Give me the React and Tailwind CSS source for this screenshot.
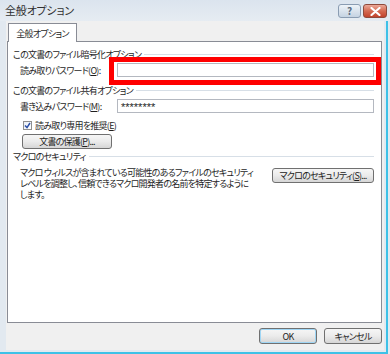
import React from "react";

const F = "font-['Noto_Sans_CJK_JP','Noto_Sans',sans-serif] [font-feature-settings:'palt']";
const T = "text-[9px] tracking-[-0.75px] leading-none";

function Btn({ children, className = "" }) {
  return (
    <div
      className={
        "flex items-center justify-center rounded-[3px] border border-[#707070] bg-linear-to-b from-[#f6f6f6] via-[#ebebeb] to-[#d6d6d6] text-[#222] " +
        T +
        " " +
        className
      }
    >
      {children}
    </div>
  );
}

function Header({ children }) {
  return (
    <div className="flex h-[14px] items-center pl-[5px] pr-[7px]">
      <span className={T + " text-[#1e1e1e] whitespace-nowrap"}>{children}</span>
      <div className="ml-[3px] h-px flex-1 bg-[#d7dfe7]" />
    </div>
  );
}

export default function App() {
  return (
    <div className={"relative h-[354px] w-[390px] overflow-hidden bg-[#e2e9f0] " + F}>
      {/* title bar */}
      <div className="flex h-[21px] items-start justify-between bg-linear-to-b from-[#dbe4ee] to-[#e6ecf2] pl-[5px] pr-[3px]">
        <span className="mt-[3px] text-[11px] leading-[15px] tracking-[-0.2px] text-[#303030]">全般オプション</span>
        <div className="mt-[4px] flex gap-[2px]">
          <div className="flex h-[14px] w-[23px] items-center justify-center rounded-[3px] border border-[#8a9cb2] bg-linear-to-b from-[#eef3f8] to-[#c5d3e2] text-[10px] font-bold leading-none text-[#5a6b80]">
            ?
          </div>
          <div className="flex h-[14px] w-[24px] items-center justify-center rounded-[3px] border border-[#8e4a3c] bg-linear-to-b from-[#eba899] via-[#d46a52] to-[#c2432c]">
            <svg width="11" height="9" viewBox="0 0 11 9">
              <path d="M1.5 1 L9.5 8 M9.5 1 L1.5 8" stroke="#ffffff" strokeWidth="2.2" strokeLinecap="round" />
            </svg>
          </div>
        </div>
      </div>

      {/* frame with cyan edge */}
      <div className="h-[333px] w-[388px] border-b-2 border-r-2 border-[#3dc1e7] pb-[2px] pl-[6px] pr-[2px]">
        <div className="flex h-full flex-col bg-[#f0f0f0]">
          {/* tab */}
          <div className="relative z-10 -mb-px ml-[2px] mt-[2px] flex h-[19px] w-[69px] items-center justify-center border border-b-0 border-[#898c95] bg-white">
            <span className={T + " text-[#1e1e1e]"}>全般オプション</span>
          </div>
          {/* panel */}
          <div className="ml-[1px] flex h-[282px] w-[375px] flex-col border border-[#898c95] bg-white pt-[5px] text-[#1e1e1e]">
            <Header>この文書のファイル暗号化オプション</Header>
            <div className="mt-[2px] flex h-[14px] items-center">
              <span className={"w-[109px] pl-[12px] whitespace-nowrap " + T}>読み取りパスワード(<u>O</u>):</span>
              <div className="h-[14px] w-[257px] border border-[#b4b8c0] bg-white" />
            </div>
            <div className="mt-[6px]">
              <Header>この文書のファイル共有オプション</Header>
            </div>
            <div className="mt-[2px] flex h-[14px] items-center">
              <span className={"w-[109px] pl-[12px] whitespace-nowrap " + T}>書き込みパスワード(<u>M</u>):</span>
              <div className="flex h-[14px] w-[257px] items-center border border-[#b4b8c0] bg-white pl-[3px] font-['Liberation_Sans',sans-serif] text-[11px] leading-none">
                <span className="mt-[3px]">********</span>
              </div>
            </div>
            <div className="mt-[5px] flex h-[14px] items-center pl-[15px]">
              <div className="flex h-[9px] w-[9px] items-center justify-center border border-[#8f8f8f] bg-linear-to-br from-[#e8eef6] to-white">
                <svg width="7" height="7" viewBox="0 0 7 7">
                  <path d="M1 3.5 L3 5.6 L6 1" fill="none" stroke="#2b4fa8" strokeWidth="1.5" />
                </svg>
              </div>
              <span className={"ml-[3px] " + T}>読み取り専用を推奨(<u>E</u>)</span>
            </div>
            <div className="ml-[14px] mt-[2px]">
              <Btn className="h-[15px] w-[90px]">文書の保護(<u>P</u>)...</Btn>
            </div>
            <div className="mt-0">
              <Header>マクロのセキュリティ</Header>
            </div>
            <div className="mt-[4px] flex items-start pl-[12px] pr-[7px]">
              <p className="whitespace-nowrap text-[9px] leading-[11px] tracking-[-0.75px]">
                マクロ ウィルスが含まれている可能性のあるファイルのセキュリティ
                <br />
                レベルを調整し、信頼できるマクロ開発者の名前を特定するように
                <br />
                します。
              </p>
              <Btn className="ml-auto mt-px h-[15px] w-[102px] whitespace-nowrap">マクロのセキュリティ(<u>S</u>)...</Btn>
            </div>
          </div>
          {/* buttons */}
          <div className="mt-[5px] flex w-[376px] justify-end gap-[7px]">
            <Btn className="h-[16px] w-[58px] border-[#3c7fb1] shadow-[inset_0_0_0_1px_#9fd6f5]">OK</Btn>
            <Btn className="h-[16px] w-[58px]">キャンセル</Btn>
          </div>
        </div>
      </div>

      {/* red annotation */}
      <div className="absolute left-[109px] top-[57px] h-[28px] w-[272px] border-[5px] border-[#ff0000]" />
    </div>
  );
}
